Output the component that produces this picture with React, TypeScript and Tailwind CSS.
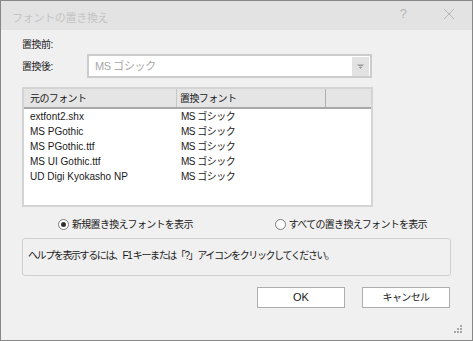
import React from "react";

const rows = [
  ["extfont2.shx", "MS ゴシック"],
  ["MS PGothic", "MS ゴシック"],
  ["MS PGothic.ttf", "MS ゴシック"],
  ["MS UI Gothic.ttf", "MS ゴシック"],
  ["UD Digi Kyokasho NP", "MS ゴシック"],
];

const font = { fontFamily: '"Liberation Sans", "Noto Sans CJK JP", sans-serif' };

export default function App() {
  return (
    <div className="h-[341px] w-[473px] overflow-hidden text-[10px] text-[#1a1a1a]" style={font}>
      <div className="flex h-full w-full flex-col border border-[#878787] bg-[#f0f0f0]">
        {/* title bar */}
        <div className="flex h-[29px] shrink-0 items-center bg-[#e3e3e3] pl-[11px] pr-[16px]">
          <span className="mt-[6px] text-[11px] tracking-[-0.3px] text-[#c4c4c4]">フォントの置き換え</span>
          <span className="ml-auto mr-[36px] mb-[4px] text-[13px] text-[#b4b4b4]">?</span>
          <svg width="12" height="12" viewBox="0 0 12 12" className="mr-[1px] mb-[4px]">
            <path d="M1 1 L11 11 M11 1 L1 11" stroke="#b8b8b8" strokeWidth="1" />
          </svg>
        </div>

        <div className="relative flex flex-1 flex-col px-[21px]">
          <div className="mt-[8px] h-[14px] leading-[14px] tracking-[-0.5px]">置換前:</div>

          <div className="mt-[2px] flex items-center">
            <span className="w-[65px] tracking-[-0.5px]">置換後:</span>
            <div className="flex h-[24px] w-[285px] items-center border-2 border-[#cccccc] bg-white pl-[6px] pr-[1px]">
              <span className="text-[11px] tracking-[-0.4px] text-[#a8a8a8]">MS ゴシック</span>
              <div className="ml-auto flex h-[19px] w-[17px] items-center justify-center bg-[#e2e2e2]">
                <svg width="7" height="5" viewBox="0 0 7 5">
                  <path d="M0 0 H7 M1 1.5 H6 M2.5 3 L3.5 4.5 L4.5 3 Z" stroke="#9a9a9a" strokeWidth="1" fill="#9a9a9a" />
                </svg>
              </div>
            </div>
          </div>

          {/* list */}
          <div className="mt-[9px] h-[120px] w-[351px] border-2 border-[#d4d4d4] bg-white">
            <div className="flex h-[20px] border-b-2 border-[#a9a9a9] bg-[#e5e5e5] tracking-[-0.6px]">
              <div className="flex w-[153px] items-center border-r border-[#c8c8c8] pl-[6px]">元のフォント</div>
              <div className="flex w-[149px] items-center border-r border-[#b0b0b0] pl-[3px]">置換フォント</div>
              <div className="flex-1" />
            </div>
            {rows.map(([a, b]) => (
              <div key={a} className="flex h-[15px] items-center">
                <div className="w-[153px] pl-[6px]">{a}</div>
                <div className="pl-[4px] tracking-[-0.5px]">{b}</div>
              </div>
            ))}
          </div>

          {/* radios */}
          <div className="mt-[9px] flex h-[16px] items-center tracking-[-0.7px]">
            <div className="ml-[36px] flex items-center gap-[3px]">
              <span className="flex h-[11px] w-[11px] items-center justify-center rounded-full border border-[#7a7a7a] bg-white">
                <span className="h-[5px] w-[5px] rounded-full bg-[#333]" />
              </span>
              <span>新規置き換えフォントを表示</span>
            </div>
            <div className="ml-[82px] flex items-center gap-[3px]">
              <span className="h-[11px] w-[11px] rounded-full border border-[#7a7a7a] bg-white" />
              <span>すべての置き換えフォントを表示</span>
            </div>
          </div>

          {/* help */}
          <div className="mt-[6px] h-[38px] w-[429px] rounded-[3px] border border-[#cfcfcf] px-[5px] pt-[9px] tracking-[-1.4px]">
            ヘルプを表示するには、F1 キーまたは「?」アイコンをクリックしてください。
          </div>

          {/* buttons */}
          <div className="mt-[11px] flex justify-end gap-[17px] pr-[1px]">
            <button className="h-[21px] w-[88px] border border-[#adadad] bg-white text-[11px]">OK</button>
            <button className="h-[21px] w-[88px] border border-[#adadad] bg-white text-[10px] tracking-[-0.6px]">キャンセル</button>
          </div>

          <svg width="8" height="8" viewBox="0 0 8 8" className="absolute bottom-[7px] right-[10px]">
            <g fill="#a8a8a8">
              <rect x="6" y="0" width="2" height="2" />
              <rect x="3" y="3" width="2" height="2" />
              <rect x="6" y="3" width="2" height="2" />
              <rect x="0" y="6" width="2" height="2" />
              <rect x="3" y="6" width="2" height="2" />
              <rect x="6" y="6" width="2" height="2" />
            </g>
          </svg>
        </div>
      </div>
    </div>
  );
}
